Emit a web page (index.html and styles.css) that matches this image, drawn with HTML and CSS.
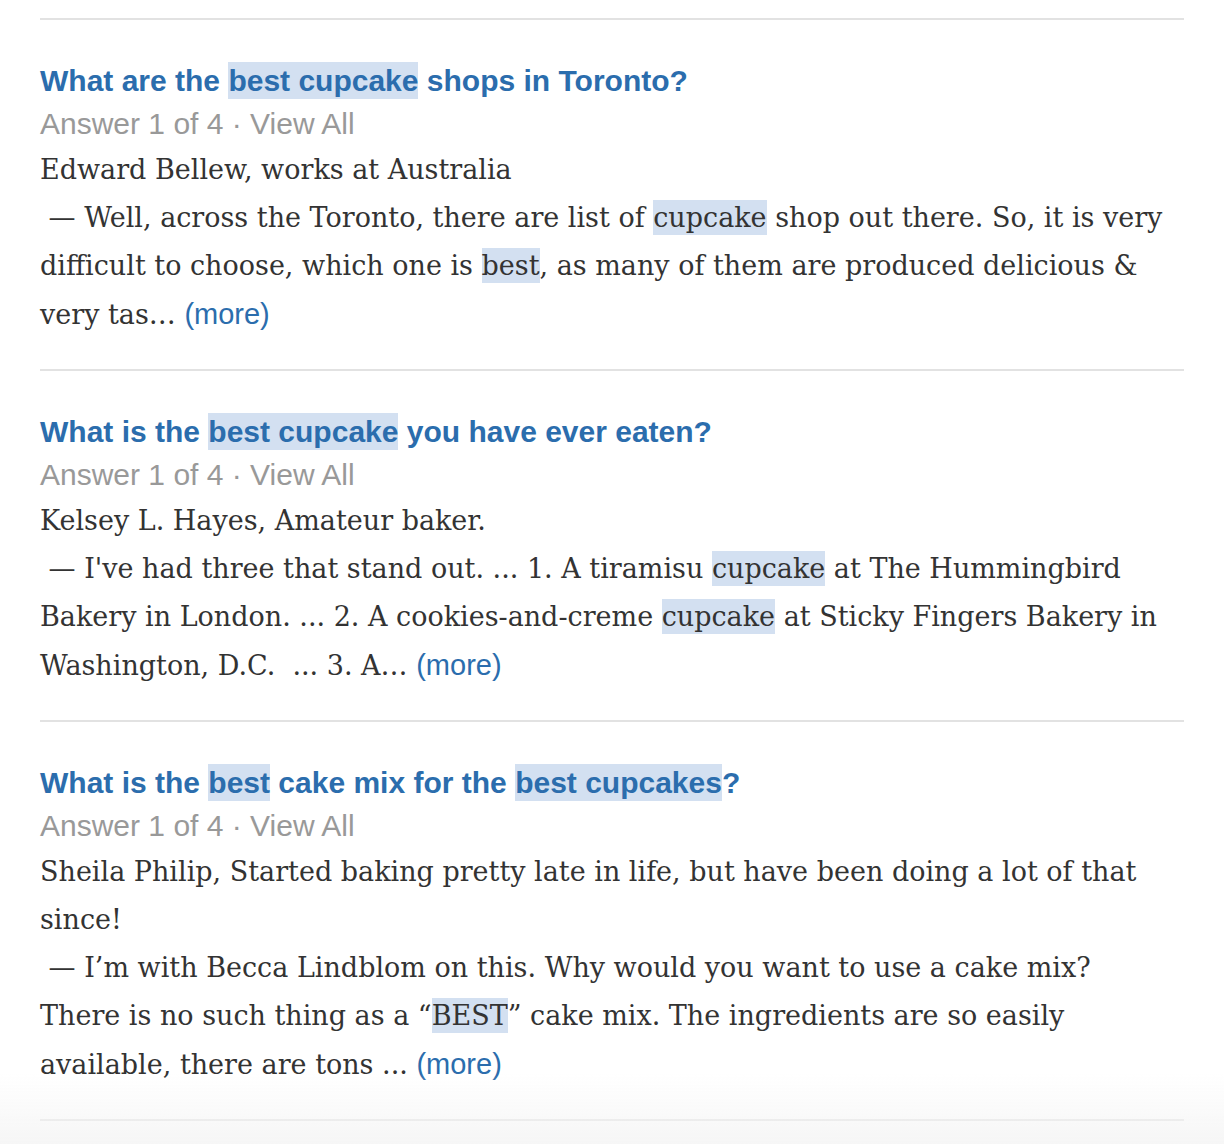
FILE: index.html
```html
<!DOCTYPE html>
<html>
<head>
<meta charset="utf-8">
<link rel="stylesheet" href="styles.css">
</head>
<body>
<div class="results">
  <div class="item">
    <div class="title"><a href="#">What are the <span class="hl">best cupcake</span> shops in Toronto?</a></div>
    <div class="meta">Answer 1 of 4 · View All</div>
    <div class="author">Edward Bellew, works at Australia</div>
    <div class="body">&nbsp;— Well, across the Toronto, there are list of <span class="hl">cupcake</span> shop out there. So, it is very difficult to choose, which one is <span class="hl">best</span>, as many of them are produced delicious &amp; very tas… <a class="more" href="#">(more)</a></div>
  </div>
  <div class="item">
    <div class="title"><a href="#">What is the <span class="hl">best cupcake</span> you have ever eaten?</a></div>
    <div class="meta">Answer 1 of 4 · View All</div>
    <div class="author">Kelsey L. Hayes, Amateur baker.</div>
    <div class="body">&nbsp;— I've had three that stand out. ... 1. A tiramisu <span class="hl">cupcake</span> at The Hummingbird Bakery in London. ... 2. A cookies-and-creme <span class="hl">cupcake</span> at Sticky Fingers Bakery in Washington, D.C. &nbsp;... 3. A… <a class="more" href="#">(more)</a></div>
  </div>
  <div class="item">
    <div class="title"><a href="#">What is the <span class="hl">best</span> cake mix for the <span class="hl">best cupcakes</span>?</a></div>
    <div class="meta">Answer 1 of 4 · View All</div>
    <div class="author">Sheila Philip, Started baking pretty late in life, but have been doing a lot of that since!</div>
    <div class="body">&nbsp;— I’m with Becca Lindblom on this. Why would you want to use a cake mix? There is no such thing as a “<span class="hl">BEST</span>” cake mix. The ingredients are so easily available, there are tons ... <a class="more" href="#">(more)</a></div>
  </div>
</div>
<div class="fade"></div>
</body>
</html>
```
FILE: styles.css
```css
html, body {
  margin: 0;
  padding: 0;
  background: #fff;
}
body {
  width: 1224px;
  height: 1144px;
  overflow: hidden;
}
.results {
  margin: 0 40px;
  padding-top: 18px;
}
.results::before {
  content: "";
  display: block;
  height: 2px;
  background: #e2e2e2;
}
.item {
  padding: 41px 0 30px;
  border-bottom: 2px solid #e2e2e2;
}
.title {
  font-family: "Liberation Sans", Arial, sans-serif;
  font-weight: bold;
  font-size: 30px;
  line-height: 40px;
}
.title a {
  color: #2b6dad;
  text-decoration: none;
}
.meta {
  font-family: "Liberation Sans", Arial, sans-serif;
  font-size: 30px;
  line-height: 45px;
  color: #999;
}
.author, .body {
  font-family: "DejaVu Serif", Georgia, serif;
  font-size: 27px;
  line-height: 48px;
  color: #333;
  margin-right: 14px;
}
.hl {
  background: #d3e0f1;
  padding: 2px 0;
}
.more {
  font-family: "Liberation Sans", Arial, sans-serif;
  font-size: 29px;
  color: #2b6dad;
  text-decoration: none;
}
.fade {
  position: fixed;
  left: 0;
  right: 0;
  bottom: 0;
  height: 70px;
  background: linear-gradient(rgba(245,245,245,0), rgba(245,245,245,0.9));
  pointer-events: none;
}
```
